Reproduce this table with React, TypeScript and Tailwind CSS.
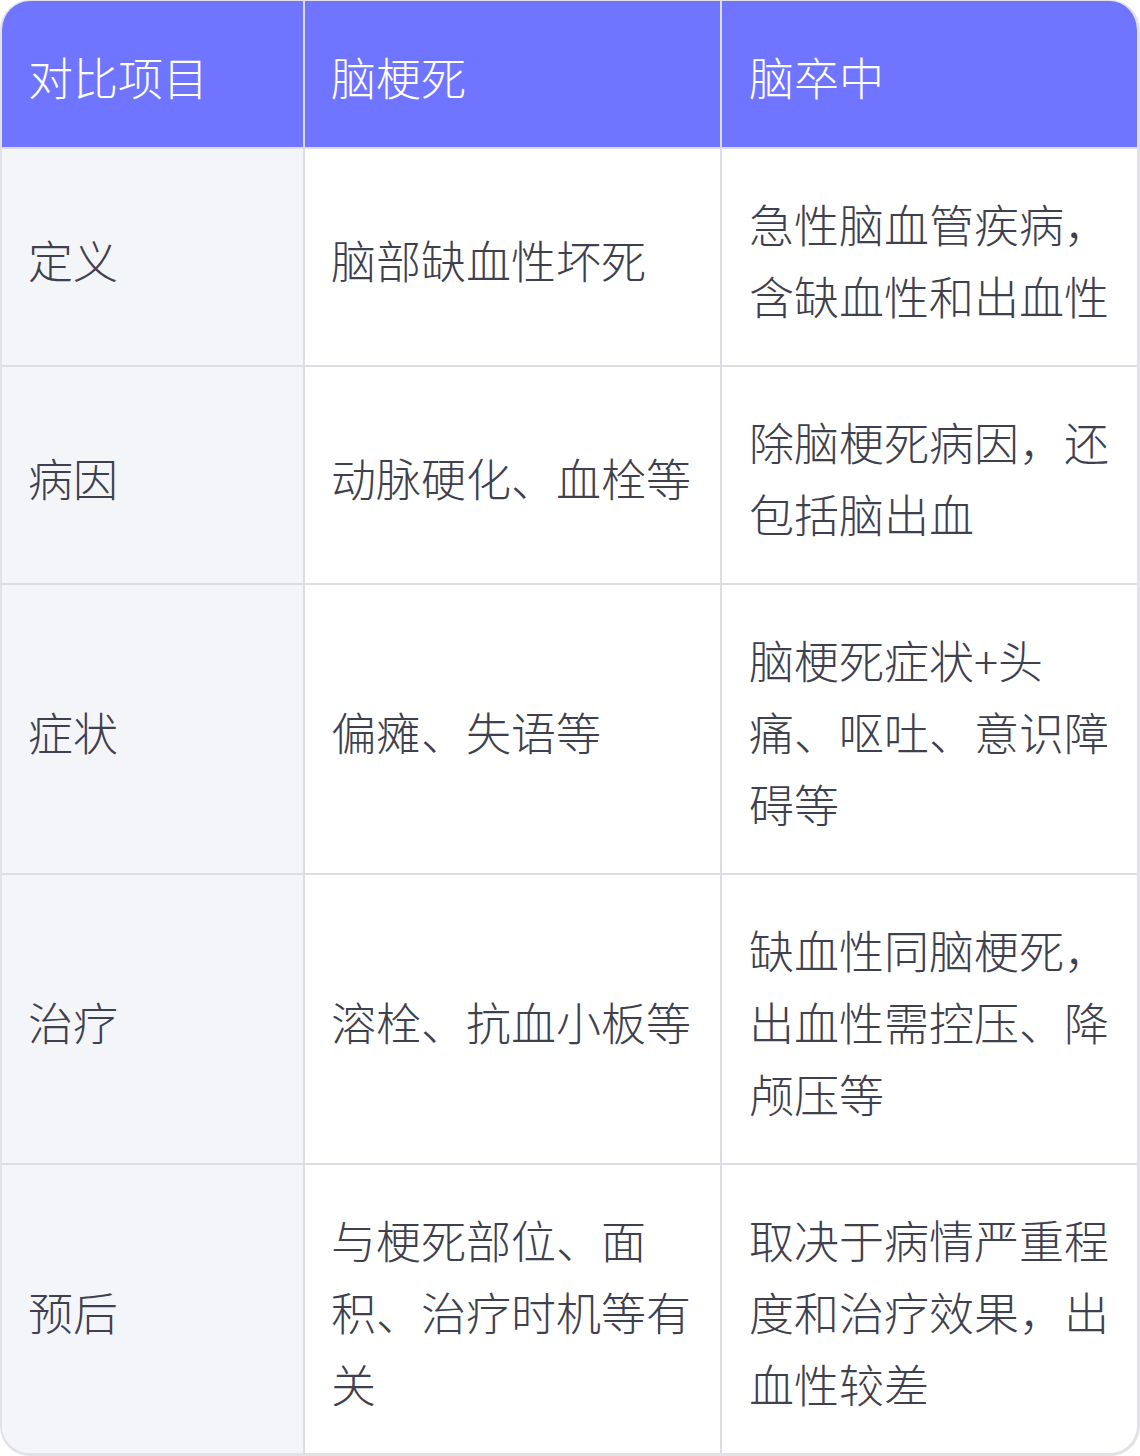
const rows: { item: string; a: string[]; b: string[] }[] = [
  { item: '定义', a: ['脑部缺血性坏死'], b: ['急性脑血管疾病，', '含缺血性和出血性'] },
  { item: '病因', a: ['动脉硬化、血栓等'], b: ['除脑梗死病因，还', '包括脑出血'] },
  { item: '症状', a: ['偏瘫、失语等'], b: ['脑梗死症状+头', '痛、呕吐、意识障', '碍等'] },
  { item: '治疗', a: ['溶栓、抗血小板等'], b: ['缺血性同脑梗死，', '出血性需控压、降', '颅压等'] },
  { item: '预后', a: ['与梗死部位、面', '积、治疗时机等有', '关'], b: ['取决于病情严重程', '度和治疗效果，出', '血性较差'] },
];

const Lines = ({ lines }: { lines: string[] }) => (
  <div>
    {lines.map((l, i) => (
      <div key={i} className="whitespace-nowrap">
        {l}
      </div>
    ))}
  </div>
);

const App = () => {
  return (
    <div className="w-[1140px] bg-white" style={{ fontFamily: '"Noto Sans CJK SC", "Noto Sans", sans-serif' }}>
      <div className="overflow-hidden rounded-[30px] border-[3px] border-t border-l-2 border-[#e1e1e6] text-[45px] font-light leading-[72px] text-[#3e404d]">
        <div className="grid grid-cols-[303px_417px_1fr] bg-[#7075ff] text-white">
          <div className="flex items-center border-r-2 border-b-2 border-[#dcdce2] px-[26px] pt-[40px] pb-[34px]">对比项目</div>
          <div className="flex items-center border-r-2 border-b-2 border-[#dcdce2] px-[26px] pt-[40px] pb-[34px]">脑梗死</div>
          <div className="flex items-center border-b-2 border-[#dcdce2] px-[27px] pt-[40px] pb-[34px]">脑卒中</div>
        </div>
        {rows.map((r, i) => (
          <div key={r.item} className="grid grid-cols-[303px_417px_1fr]">
            <div
              className={`flex items-center border-r-2 border-[#dcdce2] bg-[#f4f5f9] px-[26px] pt-[39px] pb-[33px] ${
                i < rows.length - 1 ? 'border-b-2' : ''
              }`}
            >
              {r.item}
            </div>
            <div
              className={`flex items-center border-r-2 border-[#dcdce2] px-[26px] pt-[39px] pb-[33px] ${
                i < rows.length - 1 ? 'border-b-2' : ''
              }`}
            >
              <Lines lines={r.a} />
            </div>
            <div
              className={`flex items-center border-[#dcdce2] px-[27px] pt-[39px] pb-[33px] ${
                i < rows.length - 1 ? 'border-b-2' : ''
              }`}
            >
              <Lines lines={r.b} />
            </div>
          </div>
        ))}
      </div>
    </div>
  );
};

export default App;
